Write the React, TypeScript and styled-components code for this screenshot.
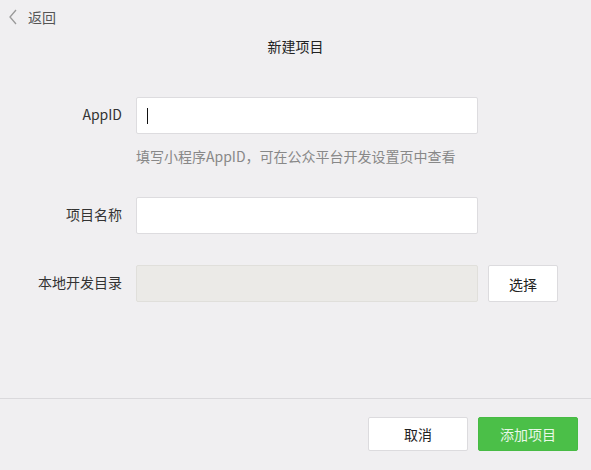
import React from "react";
import styled, { createGlobalStyle } from "styled-components";

const Global = createGlobalStyle`
  html, body { margin: 0; padding: 0; }
  body {
    background: #f0eff1;
    font-family: "Microsoft YaHei", "Noto Sans CJK SC", "Noto Sans", sans-serif;
    font-size: 14px;
    color: #333;
  }
`;

const Page = styled.div`
  width: 591px;
  height: 470px;
  display: flex;
  flex-direction: column;
  background: #f0eff1;
`;

const TopBar = styled.div`
  height: 34px;
  display: flex;
  align-items: center;
  padding-left: 8px;
  gap: 10px;
  color: #555;
  font-size: 14px;
`;

const Title = styled.div`
  text-align: center;
  font-size: 14px;
  color: #222;
  line-height: 20px;
  margin-top: 2px;
`;

const Form = styled.div`
  display: flex;
  flex-direction: column;
  margin-top: 41px;
  flex: 1;
`;

const Row = styled.div<{ $mt?: number }>`
  display: flex;
  align-items: center;
  margin-top: ${(p) => p.$mt ?? 0}px;
`;

const Label = styled.div`
  width: 136px;
  text-align: right;
  padding-right: 14px;
  box-sizing: border-box;
  font-size: 14px;
  color: #333;
  margin-top: -3px;
`;

const Input = styled.div<{ $disabled?: boolean }>`
  width: 342px;
  height: 37px;
  box-sizing: border-box;
  border: 1px solid ${(p) => (p.$disabled ? "#e0dfdb" : "#dddcdf")};
  background: ${(p) => (p.$disabled ? "#ebeae7" : "#ffffff")};
  border-radius: 2px;
  display: flex;
  align-items: center;
  padding-left: 10px;
`;

const Caret = styled.div`
  width: 1px;
  height: 16px;
  background: #111;
`;

const Hint = styled.div`
  margin-left: 136px;
  margin-top: 14px;
  font-size: 14px;
  color: #888;
  line-height: 16px;
`;

const Button = styled.button<{ $primary?: boolean; $w?: number; $h?: number }>`
  width: ${(p) => p.$w ?? 100}px;
  height: ${(p) => p.$h ?? 34}px;
  box-sizing: border-box;
  border-radius: 2px;
  border: 1px solid ${(p) => (p.$primary ? "#47bb44" : "#dcdbde")};
  background: ${(p) => (p.$primary ? "#4bbf48" : "#ffffff")};
  color: ${(p) => (p.$primary ? "#e9f8e8" : "#222")};
  font-family: inherit;
  font-size: 14px;
  padding: 0;
  cursor: pointer;
`;

const PickButton = styled(Button)`
  margin-left: 10px;
`;

const Footer = styled.div`
  border-top: 1px solid #dad9dc;
  height: 72px;
  display: flex;
  justify-content: flex-end;
  align-items: center;
  gap: 10px;
  padding-right: 13px;
  box-sizing: border-box;
  padding-bottom: 2px;
`;

const Back = () => (
  <svg width="10" height="16" viewBox="0 0 10 16">
    <path d="M8 1 L2 8 L8 15" fill="none" stroke="#9a9a9a" strokeWidth="1.3" />
  </svg>
);

export default function App() {
  return (
    <>
      <Global />
      <Page>
        <TopBar>
          <Back />
          <span>返回</span>
        </TopBar>
        <Title>新建项目</Title>
        <Form>
          <Row>
            <Label>AppID</Label>
            <Input>
              <Caret />
            </Input>
          </Row>
          <Hint>填写小程序AppID，可在公众平台开发设置页中查看</Hint>
          <Row $mt={33}>
            <Label>项目名称</Label>
            <Input />
          </Row>
          <Row $mt={31}>
            <Label>本地开发目录</Label>
            <Input $disabled />
            <PickButton $w={70} $h={37}>选择</PickButton>
          </Row>
        </Form>
        <Footer>
          <Button $w={100}>取消</Button>
          <Button $primary $w={100}>添加项目</Button>
        </Footer>
      </Page>
    </>
  );
}
